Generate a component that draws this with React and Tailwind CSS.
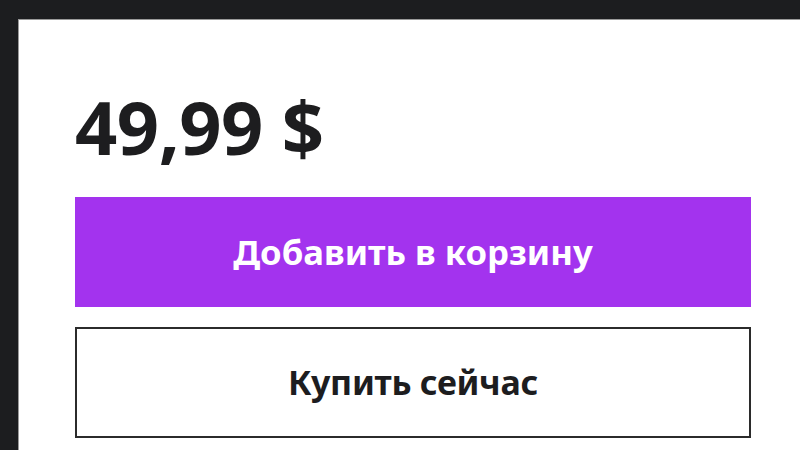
import React from 'react';

export default function App() {
  return (
    <div className="w-[800px] h-[450px] overflow-hidden bg-[#1c1d1f] pl-[18px] pt-[19px]" style={{ fontFamily: '"Noto Sans", "Open Sans", sans-serif' }}>
      <div className="h-full bg-white border-t border-l border-[#9a9a9a] pl-[56px] pr-[49px] pt-[70px]">
        {/* Price */}
        <div className="text-[74px] font-bold leading-none text-[#1d1d1f] tracking-[-0.5px]">49,99 $</div>

        {/* Actions */}
        <div className="mt-[33px] flex flex-col gap-[20px]">
          <button className="h-[110px] w-full bg-[#a333ee] text-white text-[34.7px] font-bold">
            Добавить в корзину
          </button>
          <button className="h-[111px] w-full border-2 border-[#2b2b2b] bg-white text-[#1d1d1f] text-[34px] font-bold tracking-[-0.3px]">
            Купить сейчас
          </button>
        </div>
      </div>
    </div>
  );
}
